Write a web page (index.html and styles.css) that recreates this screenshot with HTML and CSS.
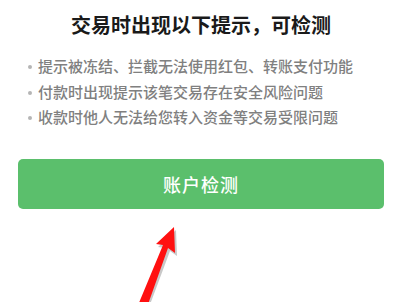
FILE: index.html
```html
<!DOCTYPE html>
<html lang="zh-CN">
<head>
	<meta charset="UTF-8">
	<title>账户检测</title>
	<link rel="stylesheet" href="styles.css">
</head>
<body>

<div id="main">

	<h1 class="title">交易时出现以下提示，可检测</h1>

	<ul class="tips">
		<li>提示被冻结、拦截无法使用红包、转账支付功能</li>
		<li>付款时出现提示该笔交易存在安全风险问题</li>
		<li>收款时他人无法给您转入资金等交易受限问题</li>
	</ul>

	<button class="check">账户检测</button>

	<svg class="arrow" width="80" height="90" viewBox="0 0 80 90">
		<polygon points="56,12 38,29 45,30 18,92 28,92 50,33 57,38" fill="#9a9a9a" opacity="0.55"/>
		<polygon points="54,9 36,26 43,27 16,92 26,92 48,30 55,35" fill="#ff1010"/>
	</svg>

</div>

</body>
</html>
```

FILE: styles.css
```css
* {
	box-sizing: border-box;
}
body {
	margin: 0;
	background-color: #fff;
	font-family: "Noto Sans CJK SC", "Noto Sans", sans-serif;
}
#main {
	position: relative;
	height: 302px;
	padding: 11px 16px 0 18px;
	overflow: hidden;
}
.title {
	margin: 0;
	font-size: 20px;
	line-height: 28px;
	font-weight: bold;
	color: #1a1a1a;
	text-align: center;
}
.tips {
	list-style: none;
	margin: 14px 0 0 0;
	padding: 0 0 0 20px;
	font-size: 15px;
	line-height: 25.5px;
	font-weight: 500;
	color: #808080;
}
.tips li {
	position: relative;
}
.tips li::before {
	content: "";
	position: absolute;
	left: -10px;
	top: 12px;
	width: 4px;
	height: 4px;
	border-radius: 50%;
	background-color: #b5b5b5;
}
.check {
	display: block;
	width: 366px;
	height: 50px;
	margin-top: 29px;
	border: none;
	border-radius: 5px;
	background-color: #5bbf6c;
	color: #fff;
	font-family: inherit;
	font-size: 18px;
	font-weight: 500;
	letter-spacing: 1px;
}
.arrow {
	position: absolute;
	left: 120px;
	top: 218px;
}
```
